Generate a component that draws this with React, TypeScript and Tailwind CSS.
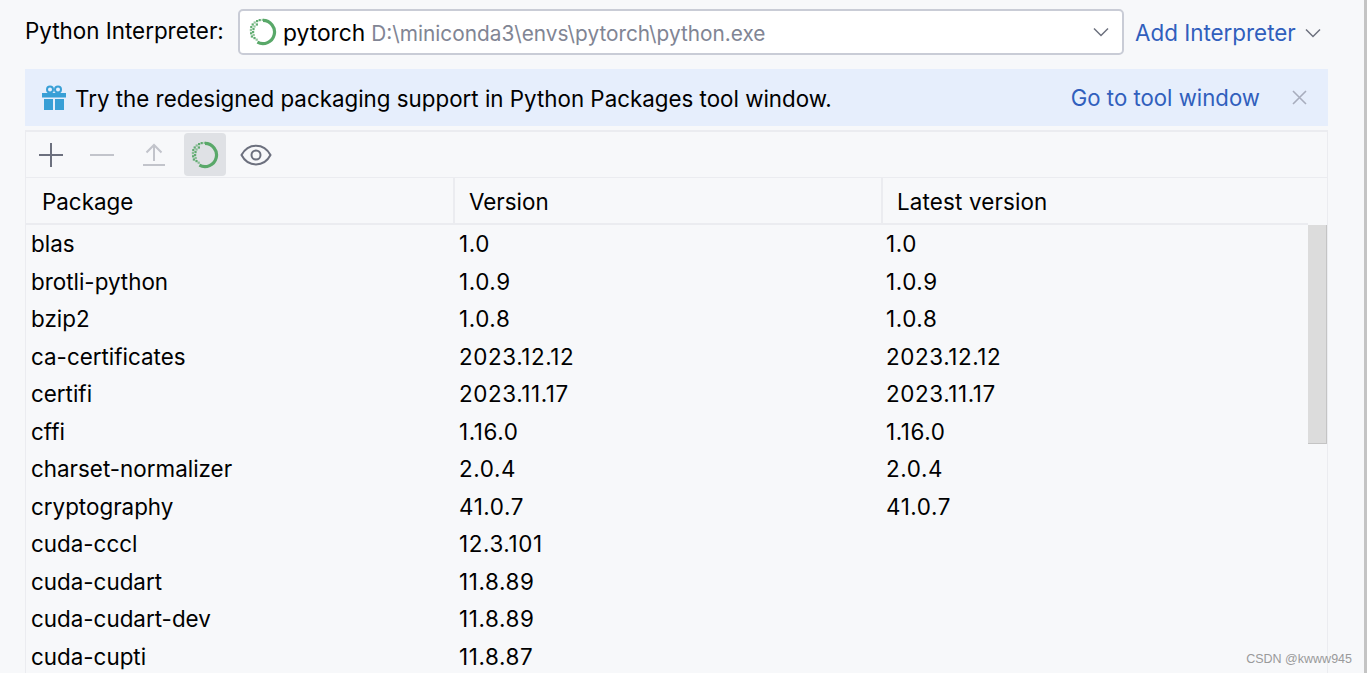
import React from "react";

const rows: [string, string, string][] = [
  ["blas", "1.0", "1.0"],
  ["brotli-python", "1.0.9", "1.0.9"],
  ["bzip2", "1.0.8", "1.0.8"],
  ["ca-certificates", "2023.12.12", "2023.12.12"],
  ["certifi", "2023.11.17", "2023.11.17"],
  ["cffi", "1.16.0", "1.16.0"],
  ["charset-normalizer", "2.0.4", "2.0.4"],
  ["cryptography", "41.0.7", "41.0.7"],
  ["cuda-cccl", "12.3.101", ""],
  ["cuda-cudart", "11.8.89", ""],
  ["cuda-cudart-dev", "11.8.89", ""],
  ["cuda-cupti", "11.8.87", ""],
];

function Conda() {
  const dots: [number, number][] = [
    [12.6, 0.8], [9.6, 1], [7, 2], [4.6, 3.4], [6.8, 5.4], [2.6, 5.4], [4.4, 7.4], [1.2, 8], [3.4, 10], [0.8, 11], [3, 13], [1, 14.2], [3.6, 16], [1.8, 17.4], [4.4, 19], [6.6, 20.6],
  ];
  return (
    <svg width="28" height="28" viewBox="0 0 28 28" fill="none" className="shrink-0">
      <path d="M14 2.4 A 11.6 11.6 0 1 1 8.4 24.2" stroke="#59a869" strokeWidth="3.2" />
      {dots.map(([x, y], i) => (
        <rect key={i} x={x} y={y} width="2.2" height="2.2" fill="#59a869" opacity={i % 3 === 0 ? 0.65 : 0.95} />
      ))}
    </svg>
  );
}

function Chevron({ className }: { className: string }) {
  return (
    <svg width="16" height="10" viewBox="0 0 16 10" fill="none" className={className}>
      <path d="M1 1.5 L8 8.5 L15 1.5" stroke="#6c707e" strokeWidth="1.5" />
    </svg>
  );
}

export default function App() {
  return (
    <div className="w-[1367px] h-[673px] overflow-hidden bg-[#f7f8fa] text-[22.4px] text-black border-r-[3px] border-[#c4c4c4] box-border relative font-['Inter',sans-serif] pr-[35px]">
      <div className="h-[69px] pl-[25px] pt-[9px] flex items-start">
        <div className="w-[213px] h-[45px] leading-[44px] shrink-0 whitespace-nowrap">Python Interpreter:</div>
        <div className="w-[886px] h-[46px] shrink-0 bg-white border-[2px] border-[#c9ccd6] rounded-[5px] flex items-center pl-[9px] pr-[13px]">
          <Conda />
          <span className="ml-[6px] pt-[3px] text-black text-[22.8px]">pytorch</span>
          <span className="ml-[6px] pt-[3px] text-[#818594] text-[20.8px]">D:\miniconda3\envs\pytorch\python.exe</span>
          <Chevron className="ml-auto" />
        </div>
        <div className="ml-[11px] h-[45px] leading-[48px] text-[#315fbd] whitespace-nowrap">Add Interpreter</div>
        <Chevron className="ml-[9px] mt-[19px] shrink-0" />
      </div>

      <div className="ml-[25px] w-[1303px] h-[57px] bg-[#e6eefc] flex items-center pl-[17px] pr-[21px]">
        <svg width="24" height="26" viewBox="0 0 24 26" className="shrink-0">
          <g fill="none" stroke="#389fd6" strokeWidth="2">
            <circle cx="8" cy="4.5" r="3" />
            <circle cx="16" cy="4.5" r="3" />
          </g>
          <rect x="0" y="8" width="24" height="4.5" fill="#389fd6" />
          <rect x="2" y="14" width="9" height="11" fill="#389fd6" />
          <rect x="13" y="14" width="9" height="11" fill="#389fd6" />
        </svg>
        <span className="ml-[9px] translate-y-[1px] text-[22.35px]">Try the redesigned packaging support in Python Packages tool window.</span>
        <span className="ml-auto text-[#315fbd] text-[22.2px]">Go to tool window</span>
        <svg width="15" height="15" viewBox="0 0 15 15" className="ml-[32px] shrink-0">
          <path d="M1 1 L14 14 M14 1 L1 14" stroke="#a8adbd" strokeWidth="1.6" />
        </svg>
      </div>

      <div className="ml-[25px] mt-[4px] w-[1303px] border-l border-r border-t-2 border-[#ebecf0]">
        <div className="h-[45px] border-b border-[#ebecf0] flex items-center pl-[11px] box-content">
          <div className="w-[28px] h-[28px] flex items-center justify-center">
            <svg width="26" height="26" viewBox="0 0 26 26"><path d="M13 1 V25 M1 13 H25" stroke="#6c707e" strokeWidth="2" /></svg>
          </div>
          <div className="ml-[23px] w-[28px] h-[28px] flex items-center justify-center">
            <svg width="26" height="26" viewBox="0 0 26 26"><path d="M1 13 H25" stroke="#c2c4cb" strokeWidth="2" /></svg>
          </div>
          <div className="ml-[24px] w-[28px] h-[28px] flex items-center justify-center">
            <svg width="24" height="24" viewBox="0 0 24 24" fill="none"><path d="M12 2 V18 M4.5 9.5 L12 2 L19.5 9.5 M1 22 H23" stroke="#c2c4cb" strokeWidth="2" /></svg>
          </div>
          <div className="ml-[16px] w-[42px] h-[43px] rounded-[4px] bg-[#dfe1e5] flex items-center justify-center">
            <Conda />
          </div>
          <div className="ml-[14px] w-[32px] h-[24px] flex items-center justify-center">
            <svg width="32" height="22" viewBox="0 0 32 22" fill="none">
              <path d="M1.5 11 C 8 -1.5, 24 -1.5, 30.5 11 C 24 23.5, 8 23.5, 1.5 11 Z" stroke="#6c707e" strokeWidth="2" />
              <circle cx="16" cy="11" r="4.5" stroke="#6c707e" strokeWidth="2" />
            </svg>
          </div>
        </div>

        <div className="h-[45px] flex">
          <div className="w-[429px] pl-[16px] leading-[48px] border-r-2 border-[#ebecf0]">Package</div>
          <div className="w-[428px] pl-[14px] leading-[48px] border-r-2 border-[#ebecf0]">Version</div>
          <div className="flex-1 pl-[14px] leading-[48px] tracking-[0.15px]">Latest version</div>
        </div>

        <div className="flex">
          <div className="w-[1282px] shrink-0 border-t-2 border-[#ebecf0]">
            {rows.map((r) => (
              <div key={r[0]} className="h-[37.5px] flex leading-[37px]">
                <div className="w-[429px] pl-[5px] whitespace-nowrap">{r[0]}</div>
                <div className="w-[427px] pl-[4px] whitespace-nowrap tracking-[0.6px]">{r[1]}</div>
                <div className="pl-[4px] whitespace-nowrap tracking-[0.6px]">{r[2]}</div>
              </div>
            ))}
          </div>
          <div className="flex-1">
            <div className="mt-[2px] w-[19px] h-[219px] bg-[#dcdcdc] border-r border-b border-[#c4c4c4]"></div>
          </div>
        </div>
      </div>

      <div className="absolute right-[12px] bottom-[4px] text-[12.5px] text-[#9a9a9a] font-['Liberation_Sans',sans-serif]">CSDN @kwww945</div>
    </div>
  );
}
